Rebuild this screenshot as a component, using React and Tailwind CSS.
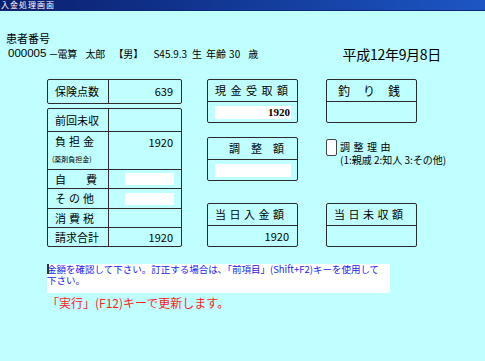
import React from "react";

const jp = { fontFamily: '"Noto Sans CJK JP", "Liberation Sans", sans-serif' };

function Box({ title, titleClass = "", children }) {
  return (
    <div className="w-[91px] h-[44px] border border-[#2b2b2b] rounded-[2px] flex flex-col">
      <div className={"h-[21px] flex items-center text-[11px] leading-none whitespace-nowrap overflow-hidden " + titleClass}>{title}</div>
      <div className="h-[21px] border-t border-[#2b2b2b] flex items-center">{children}</div>
    </div>
  );
}

function Row({ label, value, h, first }) {
  return (
    <div className={"flex " + h + (first ? "" : " border-t border-[#2b2b2b]")}>
      <div className="w-[60px] pl-[7px] flex items-center text-[11px] leading-none">{label}</div>
      <div className="flex-1 border-l border-[#2b2b2b] flex items-center justify-end pr-[8px] text-[11px] leading-none">
        {value}
      </div>
    </div>
  );
}

export default function App() {
  return (
    <div style={jp} className="w-[485px] h-[361px] bg-[#c0ffff] overflow-hidden text-black">
      {/* title bar */}
      <div className="h-[11px] bg-gradient-to-r from-[#0a1f6e] to-[#1d56c4] border-b border-[#0b2a7a] flex items-center pl-[1px]">
        <span className="text-white text-[8px] leading-none tracking-[1px]">入金処理画面</span>
      </div>

      {/* patient header */}
      <div className="pt-[21px]">
        <div className="h-[12px] pl-[6px] text-[11px] leading-[12px]">患者番号</div>
        <div className="h-[16px] mt-[2px] flex items-center text-[10px] leading-none whitespace-nowrap">
          <span className="pl-[8px] text-[11.5px]" style={{ fontFamily: '"Liberation Sans", sans-serif' }}>000005</span>
          <span className="ml-[2px]">－</span>
          <span className="ml-[-1px]">電算</span>
          <span className="ml-[8px]">太郎</span>
          <span className="ml-[8px]">【男】</span>
          <span className="ml-[10px]">S45.9.3</span>
          <span className="ml-[5px]">生</span>
          <span className="ml-[4px]">年齢</span>
          <span className="ml-[3px]">30</span>
          <span className="ml-[8px]">歳</span>
          <span className="ml-auto mr-[44px] text-[14px] tracking-[-0.3px]">平成12年9月8日</span>
        </div>
      </div>

      {/* main columns */}
      <div className="mt-[17px] pl-[47px] flex items-start">
        {/* left */}
        <div className="w-[135px] flex flex-col">
          <div className="h-[25px] border border-[#2b2b2b] rounded-[2px]">
            <Row label="保険点数" value="639" h="h-[23px]" first />
          </div>
          <div className="mt-[4px] h-[139px] border border-[#2b2b2b] rounded-[2px] flex flex-col">
            <Row label="前回未収" value="" h="h-[22px]" first />
            <div className="flex h-[38px] border-t border-[#2b2b2b]">
              <div className="w-[60px] pl-[7px] pt-[4px] flex flex-col">
                <span className="text-[11px] leading-none tracking-[3px]">負担金</span>
                <span className="mt-[9px] ml-[-3px] text-[7px] leading-none whitespace-nowrap">(薬剤負担金)</span>
              </div>
              <div className="flex-1 border-l border-[#2b2b2b] flex justify-end pr-[8px] pt-[5px] text-[11px] leading-none">
                1920
              </div>
            </div>
            <div className="flex h-[19px] border-t border-[#2b2b2b]">
              <div className="w-[60px] pl-[7px] flex items-center text-[11px] leading-none">
                <span>自</span>
                <span className="ml-[20px]">費</span>
              </div>
              <div className="flex-1 border-l border-[#2b2b2b] flex items-center pl-[16px]">
                <div className="w-[49px] h-[12px] bg-white"></div>
              </div>
            </div>
            <div className="flex h-[20px] border-t border-[#2b2b2b]">
              <div className="w-[60px] pl-[7px] flex items-center text-[11px] leading-none tracking-[3px] whitespace-nowrap">その他</div>
              <div className="flex-1 border-l border-[#2b2b2b] flex items-center pl-[16px]">
                <div className="w-[49px] h-[12px] bg-white"></div>
              </div>
            </div>
            <div className="flex h-[19px] border-t border-[#2b2b2b]">
              <div className="w-[60px] pl-[7px] flex items-center text-[11px] leading-none tracking-[3px] whitespace-nowrap">消費税</div>
              <div className="flex-1 border-l border-[#2b2b2b]"></div>
            </div>
            <Row label="請求合計" value="1920" h="h-[19px]" />
          </div>
        </div>

        {/* middle */}
        <div className="ml-[25px] flex flex-col">
          <Box title="現金受取額" titleClass="pl-[7px] tracking-[4.5px]">
            <div className="ml-[7px] w-[76px] h-[13px] bg-white flex items-center justify-end pr-[1px] text-[11px] font-bold leading-none" style={{ fontFamily: '"Liberation Serif", serif' }}>
              1920
            </div>
          </Box>
          <div className="mt-[14px]">
            <Box title="調整額" titleClass="pl-[21px] tracking-[11px]">
              <div className="ml-[7px] w-[76px] h-[13px] bg-white"></div>
            </Box>
          </div>
          <div className="mt-[22px]">
            <Box title="当日入金額" titleClass="pl-[7px] tracking-[3.5px]">
              <div className="w-full text-right pr-[8px] text-[11px] leading-none">1920</div>
            </Box>
          </div>
        </div>

        {/* right */}
        <div className="ml-[28px] flex flex-col">
          <Box title="釣り銭" titleClass="pl-[11px] tracking-[13px] text-[12px]">
            <span></span>
          </Box>
          <div className="mt-[16px] h-[48px] flex items-start">
            <div className="w-[11px] h-[17px] bg-white border border-[#444] rounded-[2px]"></div>
            <div className="ml-[3px] pt-[1px] flex flex-col text-[10px] leading-[13px] whitespace-nowrap">
              <span className="tracking-[3.5px]">調整理由</span>
              <span>(1:親戚 2:知人 3:その他)</span>
            </div>
          </div>
          <div className="mt-[16px]">
            <Box title="当日未収額" titleClass="pl-[7px] tracking-[3.5px]">
              <span></span>
            </Box>
          </div>
        </div>
      </div>

      {/* messages */}
      <div className="ml-[47px] mt-[17px] w-[343px] h-[29px] bg-white relative">
        <div className="absolute left-0 top-0 w-[2px] h-[10px] bg-[#333]"></div>
        <div className="text-[9.5px] leading-[11px] text-[#2222ee] whitespace-nowrap">
          金額を確認して下さい。訂正する場合は､「前項目」(Shift+F2)キーを使用して
        </div>
        <div className="text-[9.5px] leading-[10px] text-[#2222ee]">下さい。</div>
      </div>
      <div className="ml-[47px] mt-[2px] text-[12px] leading-[16px] text-[#ff2222]">
        「実行」(F12)キーで更新します。
      </div>
    </div>
  );
}
